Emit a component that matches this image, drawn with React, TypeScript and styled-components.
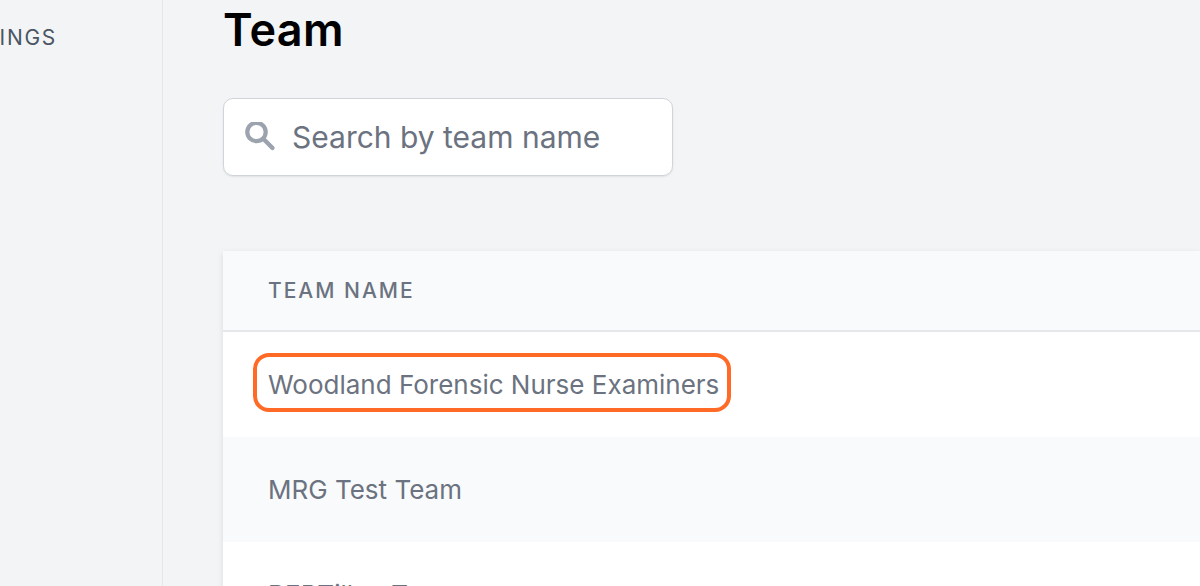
import React from 'react';
import styled, { createGlobalStyle } from 'styled-components';

const GlobalStyle = createGlobalStyle`
  html, body {
    margin: 0;
    padding: 0;
    height: 100%;
    overflow: hidden;
    background: #f3f4f6;
  }
`;

const Page = styled.div`
  width: 1200px;
  height: 586px;
  display: flex;
  overflow: hidden;
  font-family: Inter, 'Liberation Sans', sans-serif;
  background: #f3f4f6;
`;

const Sidebar = styled.aside`
  flex: 0 0 163px;
  box-sizing: border-box;
  height: 100%;
  border-right: 1px solid #e5e7eb;
  display: flex;
  justify-content: flex-end;
  align-items: flex-start;
  padding: 26px 105px 0 0;
  overflow: hidden;
`;

const NavLabel = styled.span`
  font-size: 21px;
  line-height: 24px;
  letter-spacing: 1.7px;
  font-weight: 400;
  color: #4b5563;
  white-space: nowrap;
`;

const Main = styled.main`
  flex: 1;
  min-width: 0;
  padding: 0 0 0 60px;
`;

const Title = styled.h1`
  margin: 0;
  padding-top: 6px;
  font-size: 45px;
  line-height: 48px;
  letter-spacing: 0.3px;
  font-weight: 600;
  color: #000;
`;

const SearchBox = styled.div`
  box-sizing: border-box;
  width: 450px;
  height: 78px;
  margin-top: 44px;
  padding: 0 20px 0 21px;
  display: flex;
  align-items: center;
  gap: 16px;
  background: #fff;
  border: 1px solid #d1d5db;
  border-radius: 10px;
  box-shadow: 0 1px 2px rgba(0, 0, 0, 0.08);
`;

const SearchText = styled.span`
  font-size: 30px;
  color: #6b7280;
  white-space: nowrap;
`;

const Table = styled.div`
  margin-top: 75px;
  box-shadow: 0 2px 6px rgba(0, 0, 0, 0.1);
`;

const HeaderRow = styled.div`
  box-sizing: border-box;
  height: 81px;
  padding-left: 45px;
  display: flex;
  align-items: center;
  background: #f9fafb;
  border-bottom: 2px solid #e5e7eb;
`;

const HeaderCell = styled.span`
  font-size: 21px;
  font-weight: 500;
  letter-spacing: 2px;
  color: #6b7280;
`;

const Row = styled.div<{ $striped?: boolean }>`
  height: 105px;
  padding-left: 45px;
  display: flex;
  align-items: center;
  background: ${(p) => (p.$striped ? '#f9fafb' : '#fff')};
`;

const Cell = styled.span`
  position: relative;
  font-size: 26px;
  color: #6b7280;
  white-space: nowrap;
`;

const Highlight = styled.span`
  position: absolute;
  inset: -16px -12px -12px -15px;
  border: 4px solid #ff6a26;
  border-radius: 16px;
`;

const App = () => {
  return (
    <Page>
      <GlobalStyle />
      <Sidebar>
        <NavLabel>SETTINGS</NavLabel>
      </Sidebar>
      <Main>
        <Title>Team</Title>
        <SearchBox>
          <svg width="31" height="31" viewBox="0 0 31 31" fill="none" stroke="#9ca3af" strokeLinecap="round">
            <circle cx="11.5" cy="10" r="9.2" strokeWidth="4.2" />
            <path d="M18.5 17l9 9" strokeWidth="4.4" />
          </svg>
          <SearchText>Search by team name</SearchText>
        </SearchBox>
        <Table>
          <HeaderRow>
            <HeaderCell>TEAM NAME</HeaderCell>
          </HeaderRow>
          <Row>
            <Cell>
              Woodland Forensic Nurse Examiners
              <Highlight />
            </Cell>
          </Row>
          <Row $striped>
            <Cell>MRG Test Team</Cell>
          </Row>
          <Row>
            <Cell>BERTillon Team</Cell>
          </Row>
        </Table>
      </Main>
    </Page>
  );
};

export default App;
